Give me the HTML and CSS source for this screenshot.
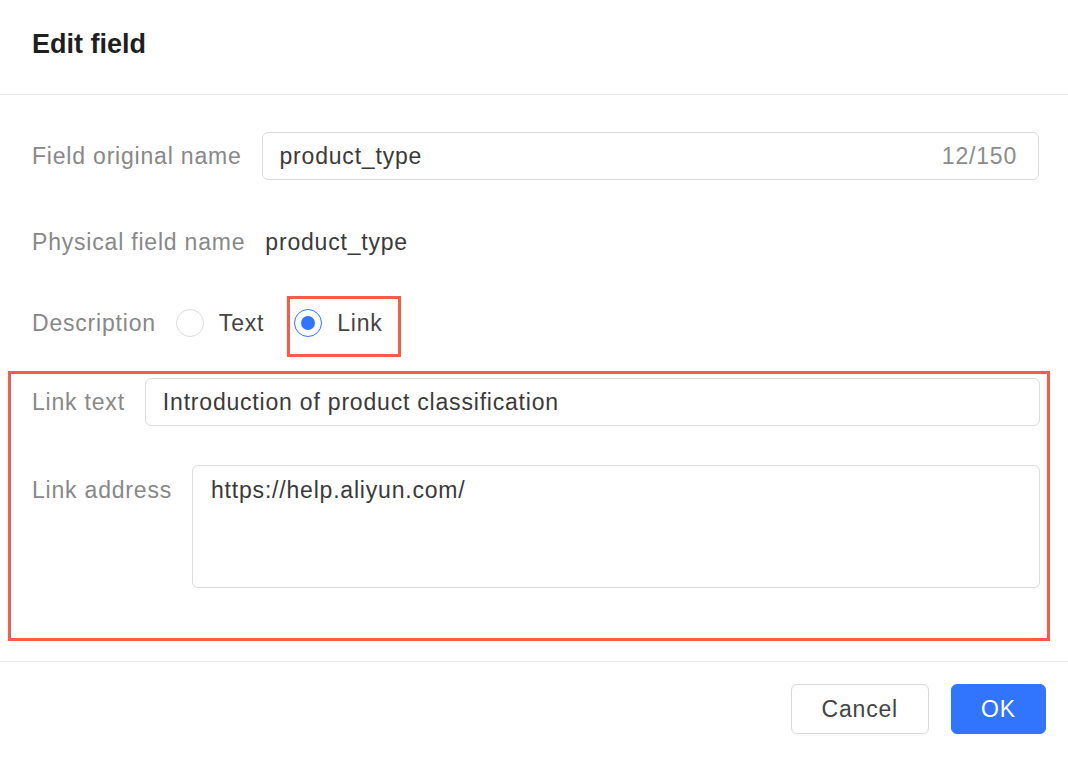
FILE: index.html
```html
<!DOCTYPE html>
<html lang="en">
<head>
  <meta charset="UTF-8" />
  <meta name="viewport" content="width=device-width, initial-scale=1.0" />
  <title>Edit field</title>
  <link rel="stylesheet" href="styles.css">
</head>
<body>
  <div class="dialog">
    <div class="dialog-header">
      <h1>Edit field</h1>
    </div>

    <div class="dialog-body">
      <div class="form-row row-name">
        <label class="form-label" for="orig-name">Field original name</label>
        <div class="input-wrap">
          <input type="text" id="orig-name" value="product_type" />
          <span class="count">12/150</span>
        </div>
      </div>

      <div class="form-row row-physical">
        <span class="form-label">Physical field name</span>
        <span class="form-value">product_type</span>
      </div>

      <div class="form-row row-desc">
        <span class="form-label">Description</span>
        <div class="radio-group">
          <label class="radio">
            <span class="radio-dot"></span>
            <span>Text</span>
          </label>
          <label class="radio checked marked">
            <span class="radio-dot"></span>
            <span>Link</span>
          </label>
        </div>
      </div>

      <!-- link settings, shown when "Link" is picked -->
      <div class="link-section">
        <div class="form-row row-link-text">
          <label class="form-label" for="link-text">Link text</label>
          <input class="input" type="text" id="link-text" value="Introduction of product classification" />
        </div>
        <div class="form-row row-link-addr">
          <label class="form-label" for="link-addr">Link address</label>
          <textarea id="link-addr" class="textarea">https://help.aliyun.com/</textarea>
        </div>
      </div>
    </div>

    <div class="dialog-footer">
      <button class="btn">Cancel</button>
      <button class="btn btn-primary">OK</button>
    </div>
  </div>
</body>
</html>
```

FILE: styles.css
```css
* { box-sizing: border-box; }
body {
  margin: 0;
  background: #fff;
  font-family: "Liberation Sans", Arial, sans-serif;
  font-size: 23px;
  letter-spacing: 0.8px;
  color: #333;
}
.dialog {
  width: 100%;
  min-height: 100vh;
  background: #fff;
}
.dialog-header {
  height: 95px;
  padding: 28px 32px 0;
  border-bottom: 1px solid #ebebeb;
}
.dialog-header h1 {
  margin: 0;
  font-size: 27px;
  line-height: 32px;
  font-weight: bold;
  letter-spacing: 0;
  color: #1f1f1f;
}
.dialog-body {
  padding: 37px 29px 0 32px;
}
.form-row {
  display: flex;
  align-items: center;
  gap: 20px;
  min-height: 48px;
}
.form-label {
  color: #888;
  white-space: nowrap;
  line-height: 48px;
}
.form-value {
  color: #3a3a3a;
  line-height: 48px;
}
.row-name { margin-bottom: 38px; }
.row-physical { margin-bottom: 33px; }
.row-desc { margin-bottom: 24px; }

input, textarea, button {
  font: inherit;
  letter-spacing: inherit;
  color: inherit;
}
.input-wrap,
.input {
  flex: 1;
  height: 48px;
  border: 1px solid #dcdcdc;
  border-radius: 6px;
  background: #fff;
}
.input-wrap {
  display: flex;
  align-items: center;
  padding: 0 21px 0 17px;
}
.input-wrap input {
  flex: 1;
  border: none;
  outline: none;
  padding: 0;
  background: transparent;
  color: #3a3a3a;
}
.input {
  padding: 0 17px;
  outline: none;
  color: #3a3a3a;
}
.count {
  color: #8c8c8c;
}

.radio-group {
  display: flex;
  align-items: center;
  gap: 30px;
}
.radio {
  position: relative;
  display: flex;
  align-items: center;
  gap: 15px;
  height: 48px;
  color: #444;
  cursor: pointer;
}
.radio-dot {
  width: 28px;
  height: 28px;
  border: 1px solid #dcdcdc;
  border-radius: 50%;
  display: flex;
  align-items: center;
  justify-content: center;
}
.radio.checked .radio-dot {
  border: 1.5px solid #3175ff;
}
.radio.checked .radio-dot::after {
  content: "";
  width: 14px;
  height: 14px;
  border-radius: 50%;
  background: #3175ff;
}
/* red annotation frame */
.radio.marked::after {
  content: "";
  position: absolute;
  left: -7px;
  right: -18px;
  top: -3px;
  bottom: -10px;
  border: 3px solid #f95b4b;
}

.link-section {
  margin: 0 -11px 0 -24px;
  padding: 4px 7px 50px 21px;
  border: 3px solid #f95b4b;
}
.row-link-text { margin-bottom: 39px; }
.row-link-addr { align-items: flex-start; }
.row-link-addr .form-label {
  line-height: 32px;
  margin-top: 9px;
}
.textarea {
  flex: 1;
  height: 123px;
  padding: 8px 18px;
  line-height: 32px;
  border: 1px solid #dcdcdc;
  border-radius: 6px;
  resize: none;
  outline: none;
  color: #3a3a3a;
}

.dialog-footer {
  margin-top: 20px;
  border-top: 1px solid #ebebeb;
  padding: 22px 22px 0 0;
  display: flex;
  justify-content: flex-end;
  gap: 22px;
}
.btn {
  height: 50px;
  padding: 0 30px;
  border: 1px solid #d9d9d9;
  border-radius: 6px;
  background: #fff;
  color: #444;
  cursor: pointer;
  box-shadow: 0 2px 0 rgba(0, 0, 0, 0.02);
}
.btn-primary {
  width: 95px;
  padding: 0;
  border-color: #3175ff;
  background: #3175ff;
  color: #fff;
}
```
